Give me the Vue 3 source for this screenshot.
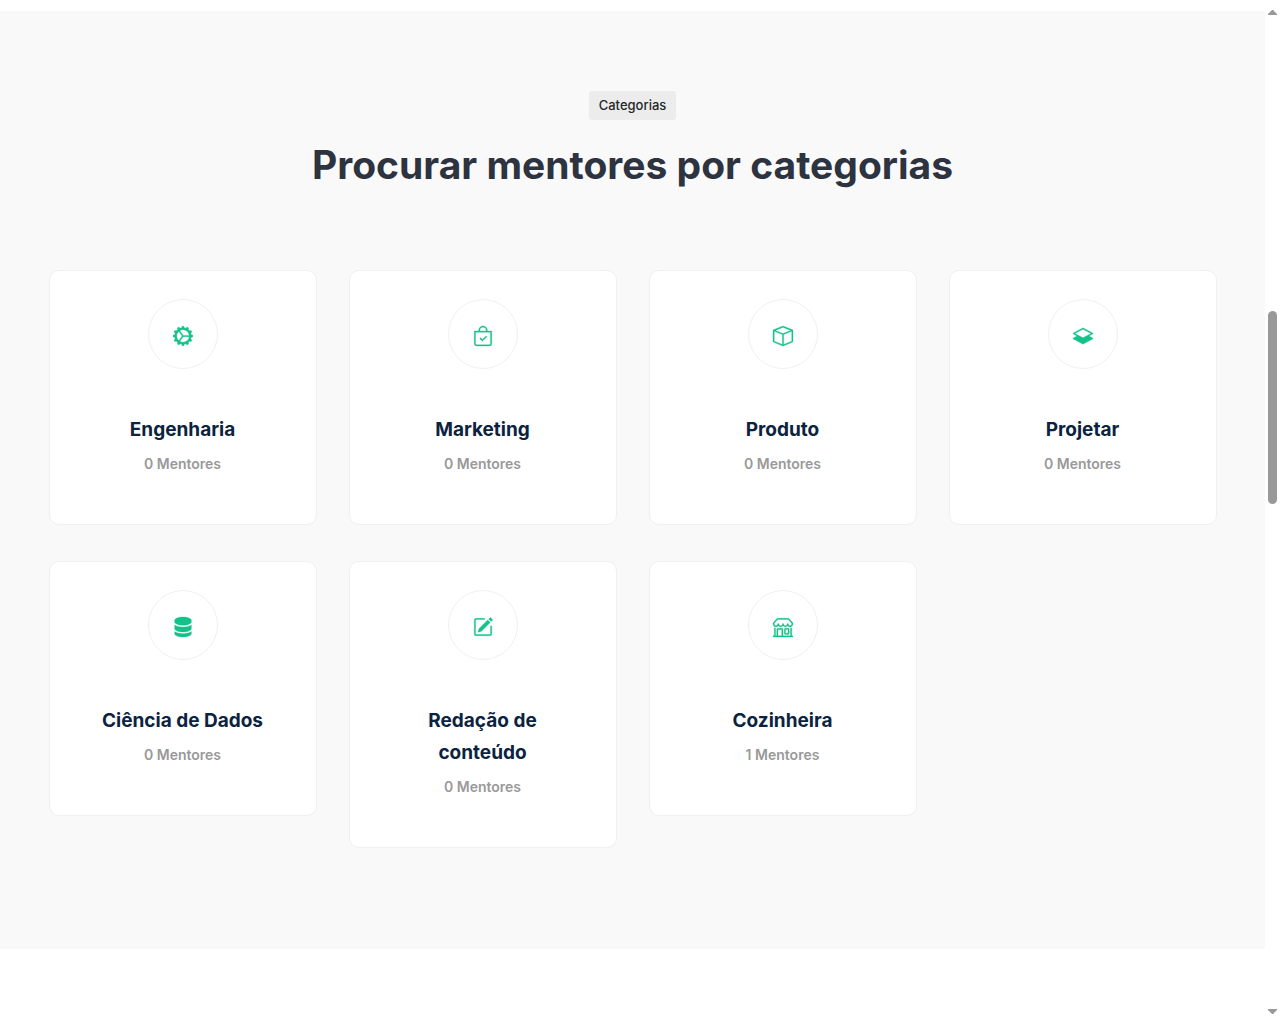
<template>
    <div class="page">
        <main class="content">
            <section class="categories">
                <div class="container">
                    <span class="badge">Categorias</span>
                    <h2 class="heading">Procurar mentores por categorias</h2>
                    <div class="grid">
                        <article v-for="category in categories" :key="category.name" class="card">
                            <div class="icon">
                                <svg viewBox="0 0 16 16" stroke-width="0.25" aria-hidden="true">
                                    <path v-for="(d, index) in category.paths" :key="index" :d="d" />
                                </svg>
                            </div>
                            <h3 class="title">
                                <a href="#">{{ category.name }}</a>
                            </h3>
                            <p class="count">{{ category.count }} Mentores</p>
                        </article>
                    </div>
                </div>
            </section>
        </main>
        <div class="scrollbar" aria-hidden="true">
            <svg class="arrow" viewBox="0 0 9 5"><path d="M0 5V4L4 0h1l4 4v1z" /></svg>
            <div class="track">
                <div class="thumb"></div>
            </div>
            <svg class="arrow" viewBox="0 0 9 5"><path d="M0 0v1l4 4h1l4-4V0z" /></svg>
        </div>
    </div>
</template>

<script setup>
import { ref } from 'vue';

const categories = ref([
    {
        name: 'Engenharia',
        count: 0,
        paths: [
            'M7.068.727c.243-.97 1.62-.97 1.864 0l.071.286a.96.96 0 0 0 1.622.434l.205-.211c.695-.719 1.888-.03 1.613.931l-.08.284a.96.96 0 0 0 1.187 1.187l.283-.081c.96-.275 1.65.918.931 1.613l-.211.205a.96.96 0 0 0 .434 1.622l.286.071c.97.243.97 1.62 0 1.864l-.286.071a.96.96 0 0 0-.434 1.622l.211.205c.719.695.03 1.888-.931 1.613l-.284-.08a.96.96 0 0 0-1.187 1.187l.081.283c.275.96-.918 1.65-1.613.931l-.205-.211a.96.96 0 0 0-1.622.434l-.071.286c-.243.97-1.62.97-1.864 0l-.071-.286a.96.96 0 0 0-1.622-.434l-.205.211c-.695.719-1.888.03-1.613-.931l.08-.284a.96.96 0 0 0-1.186-1.187l-.284.081c-.96.275-1.65-.918-.931-1.613l.211-.205a.96.96 0 0 0-.434-1.622l-.286-.071c-.97-.243-.97-1.62 0-1.864l.286-.071a.96.96 0 0 0 .434-1.622l-.211-.205c-.719-.695-.03-1.888.931-1.613l.284.08a.96.96 0 0 0 1.187-1.186l-.081-.284c-.275-.96.918-1.65 1.613-.931l.205.211a.96.96 0 0 0 1.622-.434l.071-.286zM12.973 8.5H8.25l-2.834 3.779A4.998 4.998 0 0 0 12.973 8.5zm0-1a4.998 4.998 0 0 0-7.557-3.779l2.834 3.78h4.723zM4.617 4.322A4.984 4.984 0 0 0 3.002 8c0 1.455.622 2.765 1.615 3.678L7.375 8 4.617 4.322z',
        ],
    },
    {
        name: 'Marketing',
        count: 0,
        paths: [
            'M10.854 8.146a.5.5 0 0 1 0 .708l-3 3a.5.5 0 0 1-.708 0l-1.5-1.5a.5.5 0 0 1 .708-.708L7.5 10.793l2.646-2.647a.5.5 0 0 1 .708 0z',
            'M8 1a2.5 2.5 0 0 1 2.5 2.5V4h-5v-.5A2.5 2.5 0 0 1 8 1zm3.5 3v-.5a3.5 3.5 0 1 0-7 0V4H1v10a2 2 0 0 0 2 2h10a2 2 0 0 0 2-2V4h-3.5zM2 5h12v9a1 1 0 0 1-1 1H3a1 1 0 0 1-1-1V5z',
        ],
    },
    {
        name: 'Produto',
        count: 0,
        paths: [
            'M8.186 1.113a.5.5 0 0 0-.372 0L1.846 3.5 8 5.961 14.154 3.5 8.186 1.113zM15 4.239l-6.5 2.6v7.922l6.5-2.6V4.24zM7.5 14.762V6.838L1 4.239v7.923l6.5 2.6zM7.443.184a1.5 1.5 0 0 1 1.114 0l7.129 2.852A.5.5 0 0 1 16 3.5v8.662a1 1 0 0 1-.629.928l-7.185 2.874a.5.5 0 0 1-.372 0L.63 13.09a1 1 0 0 1-.63-.928V3.5a.5.5 0 0 1 .314-.464L7.443.184z',
        ],
    },
    {
        name: 'Projetar',
        count: 0,
        paths: [
            'M8.235 1.559a.5.5 0 0 0-.47 0l-7.5 4a.5.5 0 0 0 0 .882L3.188 8 .264 9.559a.5.5 0 0 0 0 .882l7.5 4a.5.5 0 0 0 .47 0l7.5-4a.5.5 0 0 0 0-.882L12.813 8l2.922-1.559a.5.5 0 0 0 0-.882l-7.5-4zM8 9.433 1.562 6 8 2.567 14.438 6 8 9.433z',
        ],
    },
    {
        name: 'Ciência de Dados',
        count: 0,
        paths: [
            'M1.333 2.667C1.333 1.194 4.318 0 8 0s6.667 1.194 6.667 2.667V4c0 1.473-2.985 2.667-6.667 2.667S1.333 5.473 1.333 4V2.667z',
            'M1.333 6.334v3C1.333 10.805 4.318 12 8 12s6.667-1.194 6.667-2.667V6.334a6.51 6.51 0 0 1-1.458.79C11.81 7.684 9.967 8 8 8c-1.966 0-3.809-.317-5.208-.876a6.508 6.508 0 0 1-1.458-.79z',
            'M14.667 11.668a6.51 6.51 0 0 1-1.458.789c-1.4.56-3.242.876-5.21.876-1.966 0-3.809-.316-5.208-.876a6.51 6.51 0 0 1-1.458-.79v1.666C1.333 14.806 4.318 16 8 16s6.667-1.194 6.667-2.667v-1.665z',
        ],
    },
    {
        name: 'Redação de conteúdo',
        count: 0,
        paths: [
            'M15.502 1.94a.5.5 0 0 1 0 .706L14.459 3.69l-2-2L13.502.646a.5.5 0 0 1 .707 0l1.293 1.293zm-1.75 2.456-2-2L4.939 9.21a.5.5 0 0 0-.121.196l-.805 2.414a.25.25 0 0 0 .316.316l2.414-.805a.5.5 0 0 0 .196-.12l6.813-6.814z',
            'M1 13.5A1.5 1.5 0 0 0 2.5 15h11a1.5 1.5 0 0 0 1.5-1.5v-6a.5.5 0 0 0-1 0v6a.5.5 0 0 1-.5.5h-11a.5.5 0 0 1-.5-.5v-11a.5.5 0 0 1 .5-.5H9a.5.5 0 0 0 0-1H2.5A1.5 1.5 0 0 0 1 2.5v11z',
        ],
    },
    {
        name: 'Cozinheira',
        count: 1,
        paths: [
            'M2.97 1.35A1 1 0 0 1 3.73 1h8.54a1 1 0 0 1 .76.35l2.609 3.044A1.5 1.5 0 0 1 16 5.37v.255a2.375 2.375 0 0 1-4.25 1.458A2.371 2.371 0 0 1 9.875 8 2.37 2.37 0 0 1 8 7.083 2.37 2.37 0 0 1 6.125 8a2.37 2.37 0 0 1-1.875-.917A2.375 2.375 0 0 1 0 5.625V5.37a1.5 1.5 0 0 1 .361-.976l2.61-3.045zm1.78 4.275a1.375 1.375 0 0 0 2.75 0 .5.5 0 0 1 1 0 1.375 1.375 0 0 0 2.75 0 .5.5 0 0 1 1 0 1.375 1.375 0 1 0 2.75 0V5.37a.5.5 0 0 0-.12-.325L12.27 2H3.73L1.12 5.045A.5.5 0 0 0 1 5.37v.255a1.375 1.375 0 0 0 2.75 0 .5.5 0 0 1 1 0zM1.5 8.5A.5.5 0 0 1 2 9v6h1v-5a1 1 0 0 1 1-1h3a1 1 0 0 1 1 1v5h6V9a.5.5 0 0 1 1 0v6h.5a.5.5 0 0 1 0 1H.5a.5.5 0 0 1 0-1H1V9a.5.5 0 0 1 .5-.5zM4 15h3v-5H4v5zm5-5a1 1 0 0 1 1-1h2a1 1 0 0 1 1 1v3a1 1 0 0 1-1 1h-2a1 1 0 0 1-1-1v-3zm3 0h-2v3h2v-3z',
        ],
    },
]);
</script>

<style>
body {
    margin: 0;
    background: #fff;
}
</style>

<style scoped>
.page {
    display: flex;
    min-height: 100vh;
    font-family: Inter, "Liberation Sans", sans-serif;
}

.content {
    flex: 1;
    min-width: 0;
    padding-top: 11px;
}

.categories {
    padding: 80px 0 101px;
    background: #f9f9f9;
}

.container {
    display: flex;
    flex-direction: column;
    align-items: center;
    box-sizing: border-box;
    max-width: 1200px;
    margin: 0 auto;
    padding: 0 16px;
}

.badge {
    padding: 0 10px;
    border-radius: 3px;
    background: #ebeceb;
    color: #242828;
    font-size: 13px;
    font-weight: 500;
    line-height: 29px;
}

.heading {
    margin: 20px 0 80px;
    color: #2d333f;
    font-size: 39px;
    font-weight: 700;
    line-height: 50px;
    text-align: center;
}

.grid {
    display: grid;
    grid-template-columns: repeat(auto-fill, minmax(240px, 1fr));
    align-items: start;
    gap: 36px 32px;
    width: 100%;
}

.card {
    display: flex;
    flex-direction: column;
    align-items: center;
    padding: 28px 40px 48px;
    border: 1px solid #f0f0f0;
    border-radius: 10px;
    background: #fff;
    text-align: center;
}

.icon {
    display: flex;
    align-items: center;
    justify-content: center;
    box-sizing: border-box;
    width: 70px;
    height: 70px;
    padding-top: 4px;
    border: 1px solid #f0f0f0;
    border-radius: 50%;
}

.icon svg {
    overflow: visible;
    width: 20px;
    height: 20px;
    fill: #13c288;
    stroke: #13c288;
}

.title {
    margin: 45px 0 6px;
    font-size: 19px;
    font-weight: 700;
    line-height: 32px;
}

.title a {
    color: #0c2340;
    text-decoration: none;
}

.count {
    margin: 0;
    color: #999;
    font-size: 14px;
    font-weight: 600;
    line-height: 24px;
}

.scrollbar {
    display: flex;
    flex-direction: column;
    align-items: center;
    box-sizing: border-box;
    width: 15px;
    padding: 10px 3px;
}

.arrow {
    width: 9px;
    height: 5px;
    fill: #999;
}

.track {
    display: grid;
    flex: 1;
    grid-template-rows: 296fr 193fr 505fr;
}

.thumb {
    grid-row: 2;
    width: 9px;
    border-radius: 5px;
    background: #999;
}
</style>
